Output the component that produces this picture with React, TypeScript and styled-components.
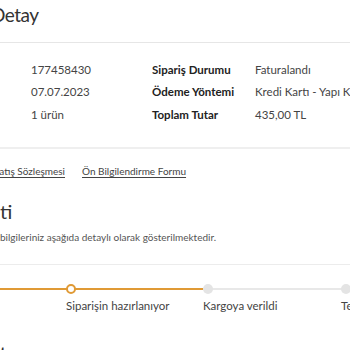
import React from 'react';
import styled, { createGlobalStyle } from 'styled-components';

const GlobalStyle = createGlobalStyle`
  html, body {
    margin: 0;
    padding: 0;
    background: #fff;
    overflow: hidden;
  }
  body {
    font-family: Lato, 'Noto Sans', sans-serif;
    color: #333;
  }
`;

const Page = styled.div`
  width: 350px;
  height: 350px;
  overflow: hidden;
  display: flex;
  flex-direction: column;
`;

const Header = styled.div`
  height: 42px;
  border-bottom: 1px solid #e6e6e6;
  display: flex;
  align-items: flex-start;
  flex-shrink: 0;
`;

const Title = styled.h1<{ $offset: number }>`
  margin: 3px 0 0 ${(p) => p.$offset}px;
  font-size: 19px;
  font-weight: 400;
  letter-spacing: -0.5px;
  line-height: 24px;
  color: #333;
  white-space: nowrap;
`;

const InfoGrid = styled.div`
  display: grid;
  grid-template-columns: 121px 103px 1fr;
  grid-auto-rows: 22.5px;
  padding: 15px 0 0 31px;
  align-items: center;
  font-size: 11.5px;
  height: 104px;
  box-sizing: border-box;
  flex-shrink: 0;
`;

const Cell = styled.div<{ $bold?: boolean }>`
  white-space: nowrap;
  font-weight: ${(p) => (p.$bold ? 700 : 400)};
  color: ${(p) => (p.$bold ? '#222' : '#444')};
`;

const ThickDivider = styled.div`
  height: 2px;
  background: #efefef;
  flex-shrink: 0;
`;

const Links = styled.div`
  display: flex;
  gap: 17px;
  padding-top: 16px;
  font-size: 10px;
  height: 49px;
  box-sizing: border-box;
  flex-shrink: 0;
`;

const DocLink = styled.a<{ $offset?: number }>`
  color: #444;
  text-decoration: underline;
  text-underline-offset: 2px;
  white-space: nowrap;
  margin-left: ${(p) => p.$offset ?? 0}px;
`;

const SectionTitle = styled.h2`
  margin: 0;
  font-size: 20px;
  font-weight: 400;
  line-height: 26px;
  color: #333;
  white-space: nowrap;
`;

const Description = styled.p`
  margin: 6px 0 0;
  font-size: 10px;
  line-height: 14px;
  color: #555;
  white-space: nowrap;
`;

const ThinDivider = styled.div`
  height: 1px;
  background: #ececec;
  margin-top: 20px;
  flex-shrink: 0;
`;

const Tracker = styled.div`
  display: grid;
  grid-template-columns: 66px 137px 138px 60px;
  padding-top: 19px;
  flex-shrink: 0;
`;

const Step = styled.div`
  display: flex;
  flex-direction: column;
`;

const Track = styled.div<{ $done: boolean }>`
  position: relative;
  height: 10px;
  display: flex;
  align-items: center;
  &::before {
    content: '';
    flex: 1;
    height: 2px;
    background: ${(p) => (p.$done ? '#e09a35' : '#e8e8e8')};
  }
`;

const Dot = styled.span<{ $state: 'done' | 'current' | 'todo' }>`
  position: absolute;
  left: 0;
  top: 0;
  width: 10px;
  height: 10px;
  box-sizing: border-box;
  border-radius: 50%;
  background: ${(p) => (p.$state === 'todo' ? '#e4e4e4' : '#fff')};
  border: ${(p) => (p.$state === 'todo' ? 'none' : '2px solid #e09a35')};
`;

const StepLabel = styled.span`
  margin-top: 5px;
  font-size: 11.5px;
  color: #444;
  white-space: nowrap;
`;

const BottomTitle = styled.h2`
  margin: 30px 0 0;
  font-size: 16px;
  line-height: 20px;
  font-weight: 700;
  color: #333;
  white-space: nowrap;
`;

const info = [
  ['177458430', 'Sipariş Durumu', 'Faturalandı'],
  ['07.07.2023', 'Ödeme Yöntemi', 'Kredi Kartı - Yapı Kredi'],
  ['1 ürün', 'Toplam Tutar', '435,00 TL'],
];

const steps: { label: string; state: 'done' | 'current' | 'todo' }[] = [
  { label: '', state: 'done' },
  { label: 'Siparişin hazırlanıyor', state: 'current' },
  { label: 'Kargoya verildi', state: 'todo' },
  { label: 'Teslim edildi', state: 'todo' },
];

export default function App() {
  return (
    <Page>
      <GlobalStyle />
      <Header>
        <Title $offset={-9}>Detay</Title>
      </Header>
      <InfoGrid>
        {info.map((row) => (
          <React.Fragment key={row[0]}>
            <Cell>{row[0]}</Cell>
            <Cell $bold>{row[1]}</Cell>
            <Cell>{row[2]}</Cell>
          </React.Fragment>
        ))}
      </InfoGrid>
      <ThickDivider />
      <Links>
        <DocLink $offset={-6}>Satış Sözleşmesi</DocLink>
        <DocLink>Ön Bilgilendirme Formu</DocLink>
      </Links>
      <SectionTitle>ti</SectionTitle>
      <Description>bilgileriniz aşağıda detaylı olarak gösterilmektedir.</Description>
      <ThinDivider />
      <Tracker>
        {steps.map((s, i) => (
          <Step key={i}>
            <Track $done={i < 2}>
              {i > 0 && <Dot $state={s.state} />}
            </Track>
            {s.label && <StepLabel>{s.label}</StepLabel>}
          </Step>
        ))}
      </Tracker>
      <BottomTitle>t</BottomTitle>
    </Page>
  );
}
